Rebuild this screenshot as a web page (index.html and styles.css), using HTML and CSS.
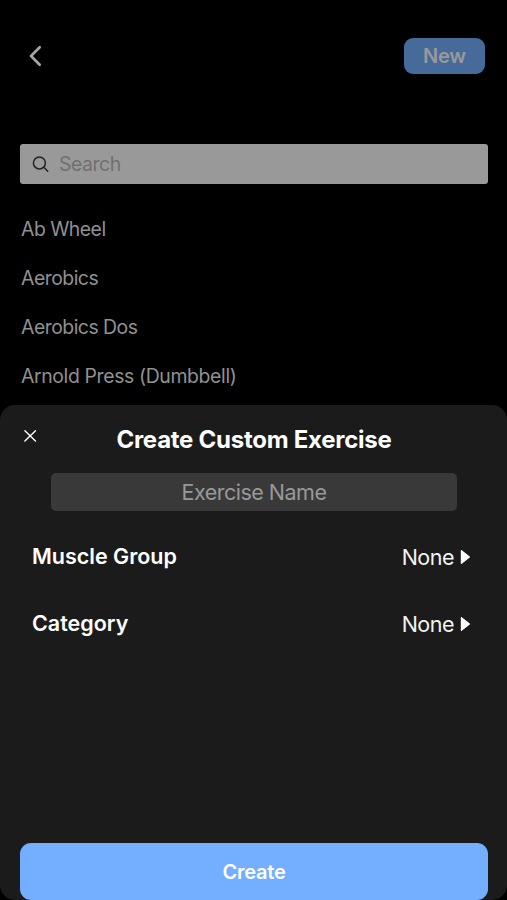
FILE: index.html
```html
<!DOCTYPE html>
<html lang="en">
<head>
<meta charset="utf-8">
<title>Create Custom Exercise</title>
<link rel="stylesheet" href="styles.css">
</head>
<body>
<div class="app">
  <main class="exercises">
    <header class="topbar">
      <svg class="back" width="14" height="22" viewBox="0 0 14 22"><path d="M11.7 2.3 3 11l8.7 8.7"/></svg>
      <button class="new">New</button>
    </header>
    <div class="search">
      <svg class="lens" width="18" height="18" viewBox="0 0 18 18"><circle cx="7.4" cy="7.9" r="6"/><path d="m11.8 12.3 3.9 3.9"/></svg>
      <span>Search</span>
    </div>
    <ul class="list">
      <li>Ab Wheel</li>
      <li>Aerobics</li>
      <li>Aerobics Dos</li>
      <li class="long">Arnold Press (Dumbbell)</li>
    </ul>
  </main>
  <section class="sheet">
    <header class="sheet-head">
      <svg class="close" width="14" height="14" viewBox="0 0 14 14"><path d="m1.9 1.7 10.6 10.4M12.5 1.7 1.9 12.1"/></svg>
      <h1>Create Custom Exercise</h1>
    </header>
    <div class="name"><span>Exercise Name</span></div>
    <div class="row">
      <h2>Muscle Group</h2>
      <div class="value"><span>None</span><svg width="10" height="16" viewBox="0 0 10 16"><path d="M1.4 1.6 9.4 8 1.4 14.4Z"/></svg></div>
    </div>
    <div class="row">
      <h2>Category</h2>
      <div class="value"><span>None</span><svg width="10" height="16" viewBox="0 0 10 16"><path d="M1.4 1.6 9.4 8 1.4 14.4Z"/></svg></div>
    </div>
    <button class="create">Create</button>
  </section>
</div>
</body>
</html>
```
FILE: styles.css
```css
* { box-sizing: border-box; margin: 0; padding: 0; }
body { background: #000; font-family: Inter, "Liberation Sans", sans-serif; }
button { border: 0; font-family: inherit; }
svg { display: block; fill: none; stroke-linecap: round; stroke-linejoin: round; flex: none; }
.app { height: 900px; display: flex; flex-direction: column; overflow: hidden; }
.exercises { height: 405px; padding: 38px 19px 0 20px; }
.topbar { height: 36px; display: flex; align-items: center; justify-content: space-between; padding: 0 3px 0 8px; }
.back { stroke: #a5a5a5; stroke-width: 2.7; }
.new { width: 81px; height: 36px; border-radius: 9px; background: #466b9b; color: #999; font-size: 20px; font-weight: 600; line-height: 37px; letter-spacing: -.2px; }
.search { margin-top: 70px; height: 40px; border-radius: 3px; background: #999; display: flex; align-items: center; padding-left: 12px; gap: 9px; color: #707070; font-size: 19.5px; line-height: 40px; letter-spacing: -.5px; }
.lens { stroke: #222; stroke-width: 1.5; }
.list { list-style: none; padding: 21px 1px 0; color: #919191; font-size: 19.4px; line-height: 49px; letter-spacing: -.5px; }
.long { letter-spacing: -.36px; }
.sheet { height: 495px; background: #1b1b1b; border-radius: 15px; padding: 0 19px 0 20px; display: flex; flex-direction: column; }
.sheet-head { height: 68px; display: grid; grid-template-columns: 14px 1fr 14px; padding: 24px 3px 0; }
.close { stroke: #fff; stroke-width: 1.4; }
h1 { color: #fff; font-size: 24px; line-height: 22px; font-weight: 700; text-align: center; white-space: nowrap; letter-spacing: -.26px; }
.name { height: 38px; margin: 0 31px; border-radius: 5px; background: #393939; color: #989898; font-size: 21.5px; line-height: 38px; text-align: center; letter-spacing: -.5px; }
.row { height: 67px; display: flex; align-items: center; justify-content: space-between; padding: 0 18px 0 12px; }
.name + .row { margin-top: 11px; }
h2 { color: #fff; font-size: 21.5px; font-weight: 600; line-height: 30px; }
.value { display: flex; align-items: center; gap: 6px; color: #f2f2f2; font-size: 21.5px; line-height: 30px; padding-top: 2px; letter-spacing: -.5px; }
.value svg { fill: #fff; stroke: #fff; stroke-width: 1.2; }
.create { margin-top: auto; height: 57px; border-radius: 11px; background: #74aeff; color: #fff; font-size: 20px; font-weight: 600; line-height: 58px; letter-spacing: -.2px; }
```
